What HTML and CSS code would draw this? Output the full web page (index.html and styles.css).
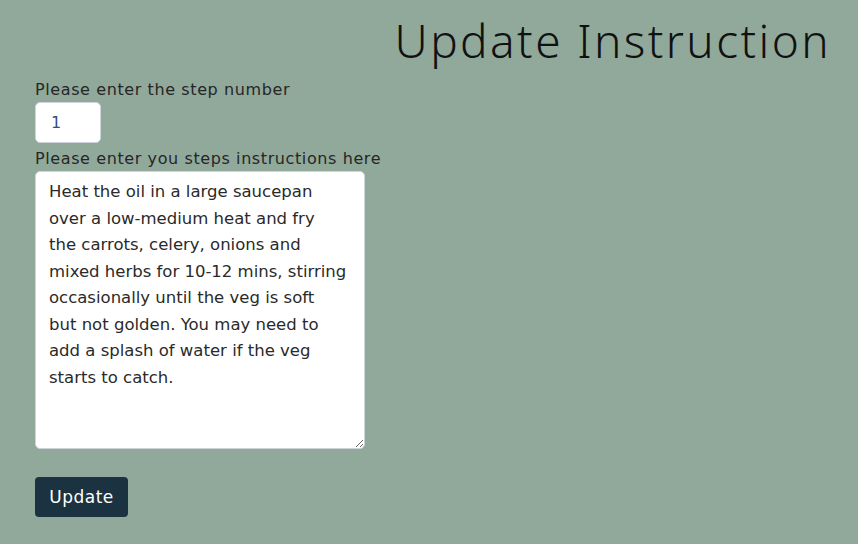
FILE: index.html
```html
<!DOCTYPE html>
<html lang="en">
<head>
<meta charset="utf-8">
<title>Update Instruction</title>
<link rel="stylesheet" href="styles.css">
</head>
<body>
<main class="page">
  <h1 class="title">Update Instruction</h1>
  <form class="form">
    <label class="label" for="step">Please enter the step number</label>
    <input class="step-input" id="step" type="text" value="1">
    <label class="label" for="instr">Please enter you steps instructions here</label>
    <textarea class="instr" id="instr">Heat the oil in a large saucepan
over a low-medium heat and fry
the carrots, celery, onions and
mixed herbs for 10-12 mins, stirring
occasionally until the veg is soft
but not golden. You may need to
add a splash of water if the veg
starts to catch.</textarea>
    <button class="btn" type="button">Update</button>
  </form>
</main>
</body>
</html>
```
FILE: styles.css
```css
html, body {
  margin: 0;
  padding: 0;
  background: #91a99b;
}
body {
  font-family: "DejaVu Sans", sans-serif;
  color: #1a1a1a;
}
.page {
  padding: 14px 30px 0 35px;
}
.title {
  margin: 0 -3px 0 0;
  text-align: right;
  font-family: "Noto Sans", sans-serif;
  font-weight: 300;
  font-size: 46px;
  line-height: 52px;
  letter-spacing: 2.4px;
  color: #111;
}
.form {
  display: flex;
  flex-direction: column;
  align-items: flex-start;
  margin-top: 12px;
}
.label {
  font-size: 16px;
  line-height: 24px;
  font-weight: 400;
  letter-spacing: 0.6px;
  color: #262626;
}
.step-input {
  box-sizing: border-box;
  width: 66px;
  height: 41px;
  border: 1px solid #ced4da;
  border-radius: 5px;
  padding: 0 15px;
  font-family: inherit;
  font-size: 16px;
  color: #2b4f86;
  background: #fff;
  margin-bottom: 4px;
}
.instr {
  box-sizing: border-box;
  width: 330px;
  height: 278px;
  border: 1px solid #ced4da;
  border-radius: 5px;
  padding: 7px 10px 7px 13px;
  font-family: inherit;
  font-size: 16.5px;
  line-height: 26.5px;
  font-weight: 400;
  color: #2a2a2a;
  background: #fff;
  resize: vertical;
}
.btn {
  margin-top: 28px;
  box-sizing: border-box;
  width: 93px;
  height: 40px;
  border: none;
  border-radius: 4px;
  background: #1b3340;
  color: #fff;
  font-family: inherit;
  font-size: 17px;
  letter-spacing: 0.5px;
  cursor: pointer;
}
```
